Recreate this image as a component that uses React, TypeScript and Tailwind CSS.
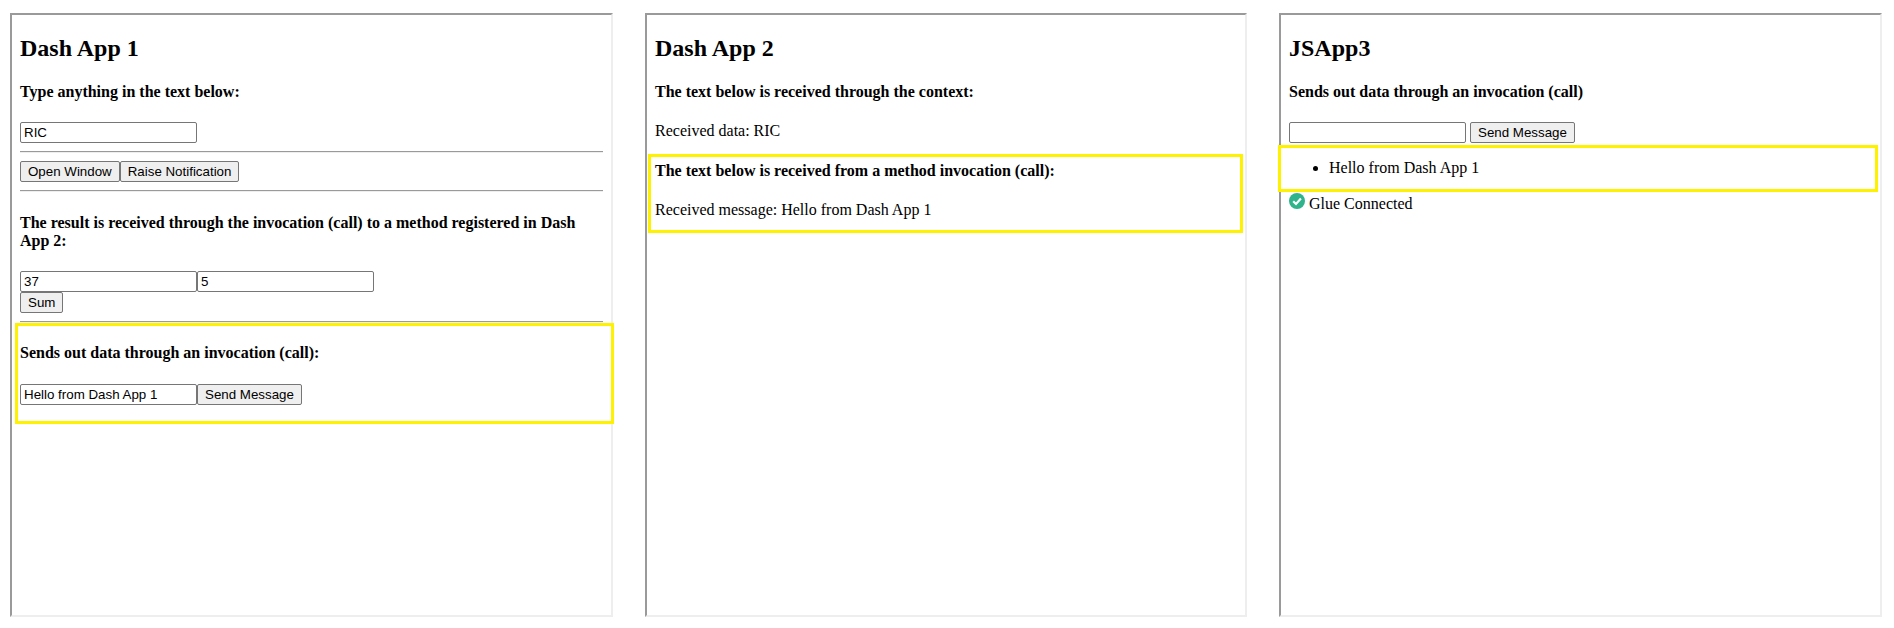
import React from 'react';

const inputClass = "w-[177px] h-[21px] border border-[#767676] rounded-[2px] px-[3px] bg-white text-[13.33px] leading-[normal] font-['Liberation_Sans',sans-serif] text-black";
const buttonClass = "block h-[21px] border border-[#767676] rounded-[2px] px-[7px] bg-[#efefef] text-[13.33px] leading-[normal] font-['Liberation_Sans',sans-serif] text-black";
const frameClass = "relative h-[604px] shrink-0 border-2 border-t-[#9a9a9a] border-l-[#9a9a9a] border-r-[#eeeeee] border-b-[#eeeeee] bg-white px-[8px] font-['Liberation_Serif',serif] text-[16px] leading-[normal] text-black";
const titleClass = "text-[24px] leading-[normal] font-bold pt-[19.92px] mb-[19.92px]";
const labelClass = "font-bold my-[21.28px]";
const ruleClass = "my-[8px] h-[2px] border-t border-b border-t-[#9a9a9a] border-b-[#eeeeee]";
const noteClass = "absolute border-[3px] border-[#fff200]";

const App: React.FC = () => {
  return (
    <div className="flex h-[628px] w-[1894px] gap-[32px] bg-white pl-[10px] pt-[13px]">
      {/* Dash App 1 */}
      <div className={`${frameClass} w-[603px]`}>
        <h2 className={titleClass}>Dash App 1</h2>
        <h4 className={labelClass}>Type anything in the text below:</h4>
        <input className={`${inputClass} block`} defaultValue="RIC" readOnly />
        <hr className={ruleClass} />
        <div className="flex">
          <button className={buttonClass}>Open Window</button>
          <button className={buttonClass}>Raise Notification</button>
        </div>
        <hr className={ruleClass} />
        <h4 className={labelClass}>The result is received through the invocation (call) to a method registered in Dash App 2:</h4>
        <div className="flex">
          <input className={inputClass} defaultValue="37" readOnly />
          <input className={inputClass} defaultValue="5" readOnly />
        </div>
        <button className={buttonClass}>Sum</button>
        <hr className={ruleClass} />
        <h4 className={labelClass}>Sends out data through an invocation (call):</h4>
        <div className="flex">
          <input className={inputClass} defaultValue="Hello from Dash App 1" readOnly />
          <button className={buttonClass}>Send Message</button>
        </div>
        <div className={`${noteClass} left-[3px] top-[308px] h-[101px] w-[599px]`} />
      </div>
      {/* Dash App 2 */}
      <div className={`${frameClass} w-[602px]`}>
        <h2 className={titleClass}>Dash App 2</h2>
        <h4 className={labelClass}>The text below is received through the context:</h4>
        <div>Received data: RIC</div>
        <h4 className={labelClass}>The text below is received from a method invocation (call):</h4>
        <div>Received message: Hello from Dash App 1</div>
        <div className={`${noteClass} left-[1px] top-[139px] h-[79px] w-[595px]`} />
      </div>
      {/* JSApp3 */}
      <div className={`${frameClass} w-[603px]`}>
        <h2 className={titleClass}>JSApp3</h2>
        <h4 className={labelClass}>Sends out data through an invocation (call)</h4>
        <div className="flex gap-[4px]">
          <input className={inputClass} readOnly />
          <button className={buttonClass}>Send Message</button>
        </div>
        <ul className="list-disc pl-[40px] my-[16px]">
          <li>Hello from Dash App 1</li>
        </ul>
        <div className="flex items-start gap-[4px]">
          <svg viewBox="0 0 16 16" className="h-[16px] w-[16px] shrink-0">
            <circle cx="8" cy="8" r="8" fill="#2fb38a" />
            <path d="M4.2 8.3 L7 11 L11.9 5.6" fill="none" stroke="#fff" strokeWidth="2.2" />
          </svg>
          <span className="mt-[2px]">Glue Connected</span>
        </div>
        <div className={`${noteClass} left-[-3px] top-[130px] h-[47px] w-[600px]`} />
      </div>
    </div>
  );
};

export default App;
